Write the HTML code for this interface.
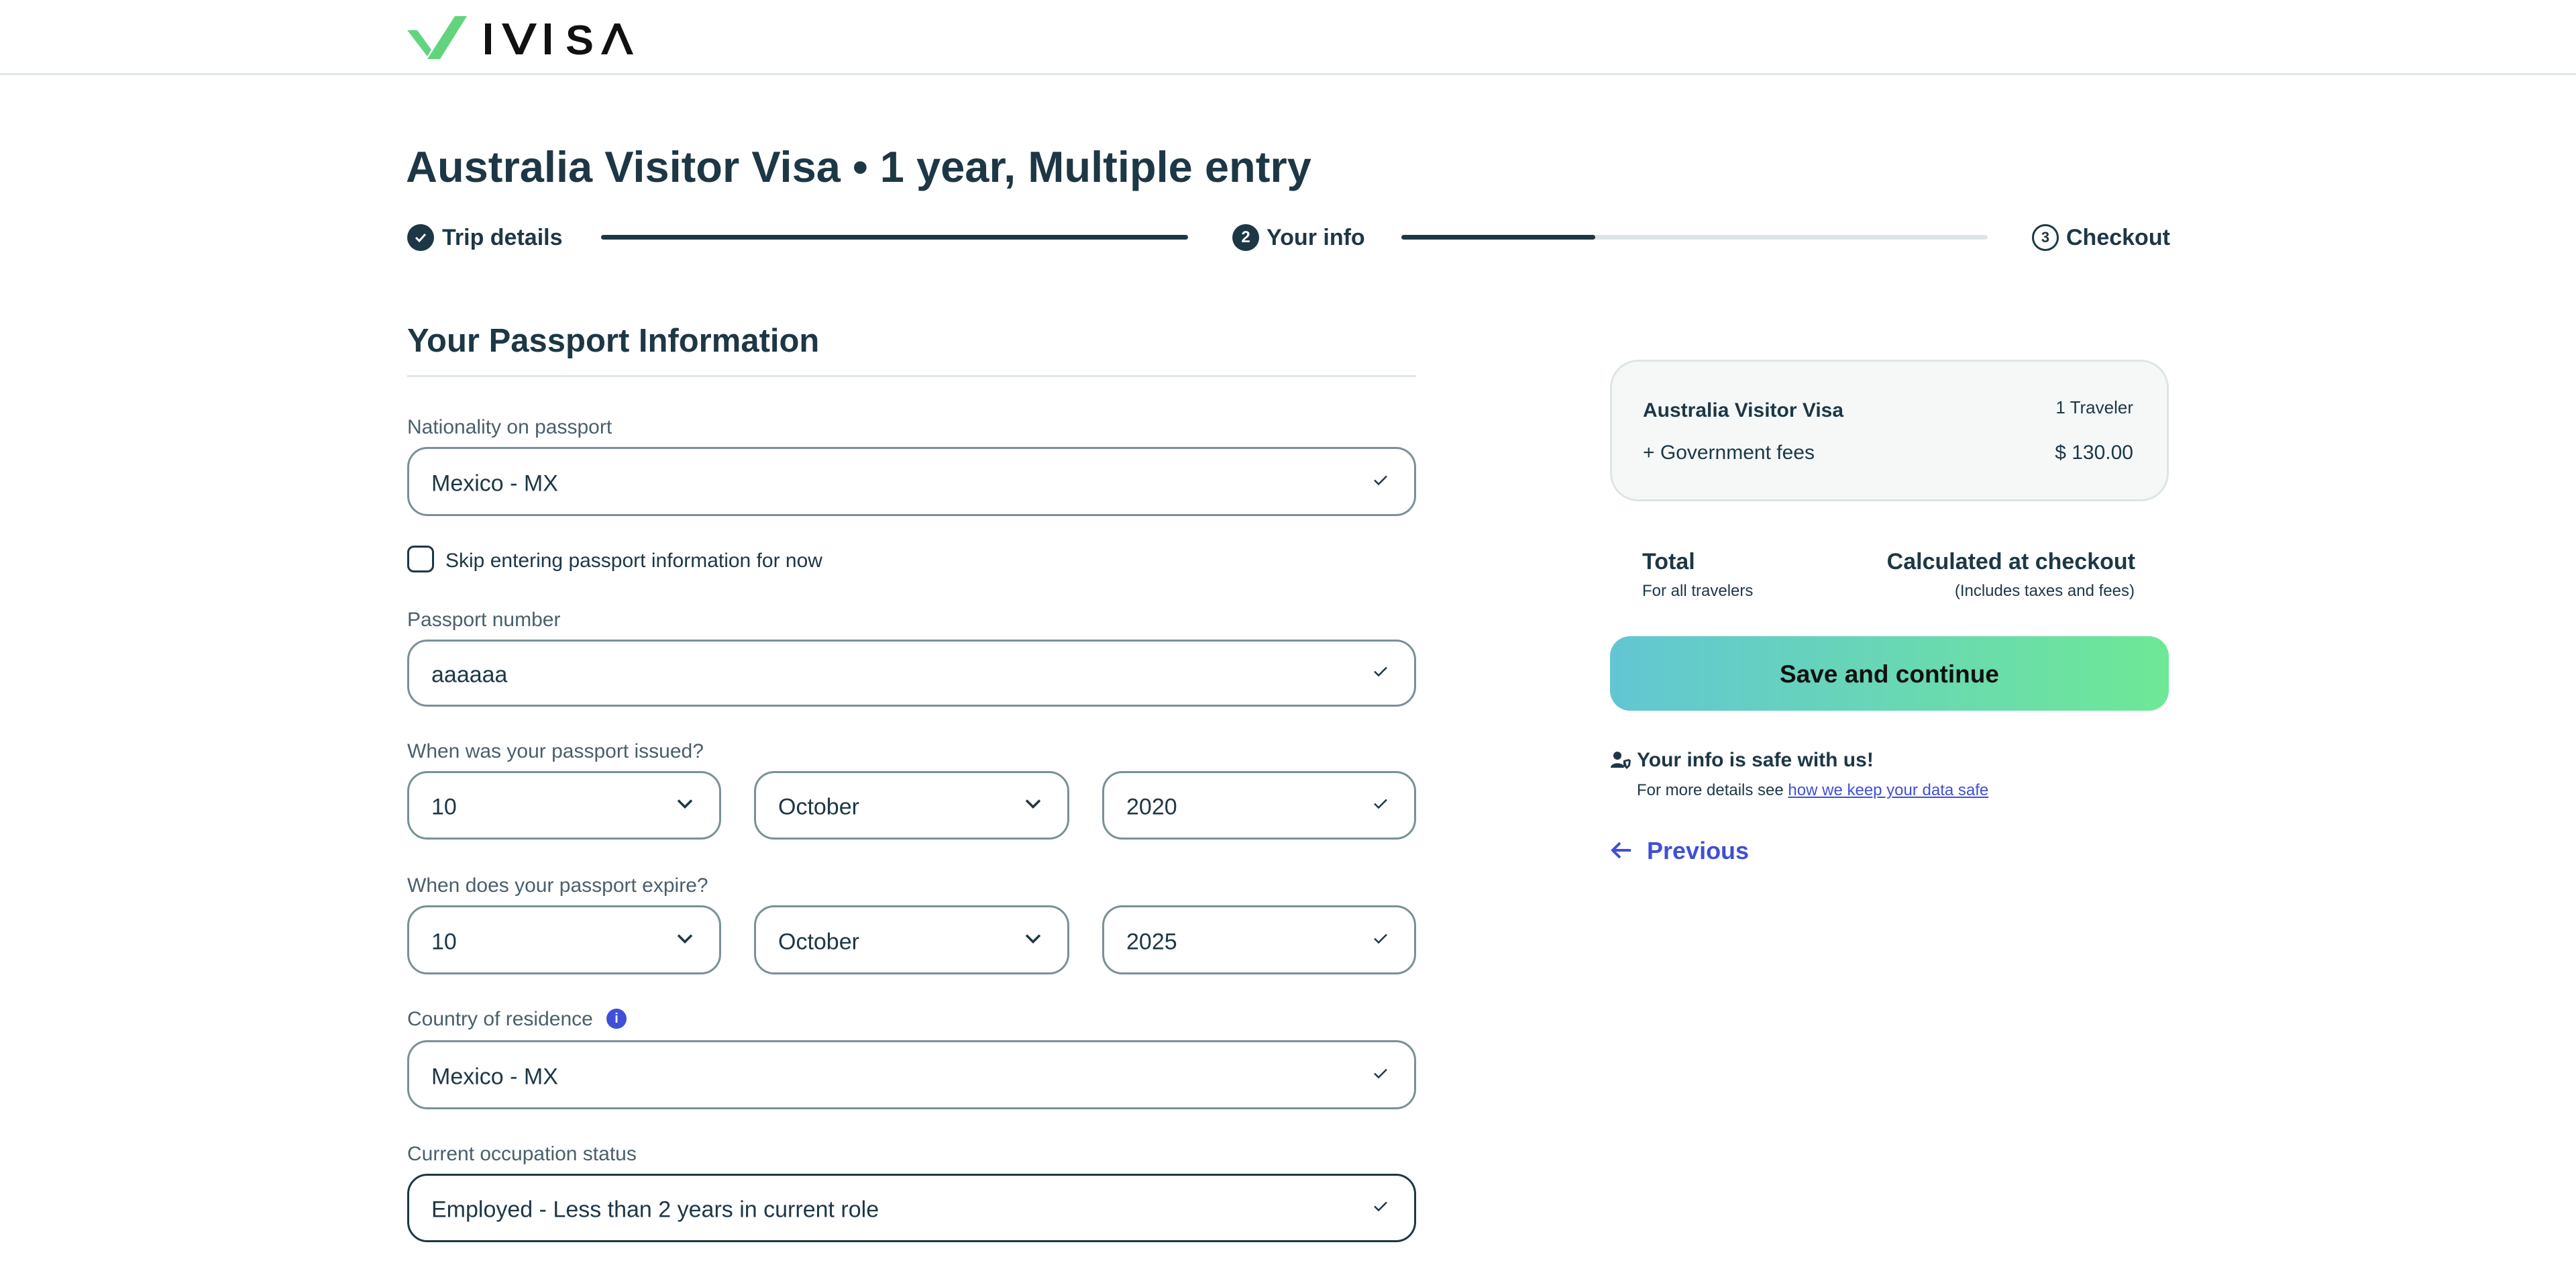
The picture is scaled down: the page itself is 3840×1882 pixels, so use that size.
<!DOCTYPE html>
<html><head><meta charset="utf-8"><style>
*{box-sizing:border-box;margin:0;padding:0}
body{width:3840px;height:1882px;background:#fff;font-family:"Liberation Sans",Arial,sans-serif;color:#1d3745;position:relative;overflow:hidden}
.a{position:absolute;white-space:nowrap}
.hdr{position:absolute;left:0;top:0;width:3840px;height:112px;border-bottom:3px solid #dfe6e7}
.lbl{position:absolute;left:607px;font-size:30px;color:#4a5f6a}
.inp{position:absolute;border:3px solid #7a9096;border-radius:30px;background:#fff}
.inp span{position:absolute;left:33px;top:calc(50% + 3px);transform:translateY(-50%);font-size:34px;color:#1d3745}
.inp i{position:absolute;right:38px;top:50%;transform:translateY(-50%);font-style:normal}
.chk{width:24px;height:18px}
.chev{width:26px;height:16px}
.circ{position:absolute;width:40px;height:40px;border-radius:50%;display:flex;align-items:center;justify-content:center;font-size:24px;font-weight:bold}
</style></head><body>
<div class="hdr"></div>
<svg class="a" style="left:607px;top:22px" width="340" height="68" viewBox="0 0 340 68">
<path d="M0 23 L15 23 L36 52 L30 62 Z" fill="#63d47e"/>
<path d="M71 2 L89 2 L49 66 L30 66 Z" fill="#63d47e"/>
<rect x="116" y="13" width="9" height="46" fill="#111"/>
<path d="M141 13 L151 13 L167 50 L183 13 L193 13 L172 59 L162 59 Z" fill="#111"/>
<rect x="205" y="13" width="9" height="46" fill="#111"/>
<text x="236" y="59" font-family="Liberation Sans" font-weight="bold" font-size="62" fill="#111" textLength="42" lengthAdjust="spacingAndGlyphs">S</text>
<path d="M289 59 L309 13 L317 13 L337 59 L328 59 L313 23 L298 59 Z" fill="#111"/>
</svg>

<div class="a" style="left:605px;top:211px;font-size:65px;font-weight:bold">Australia Visitor Visa • 1 year, Multiple entry</div>

<div class="circ" style="left:607px;top:334px;background:#1d3745;color:#fff"><svg width="20" height="16" viewBox="0 0 20 16"><path d="M3 8 L8 13 L17 3" stroke="#fff" stroke-width="3" fill="none"/></svg></div>
<div class="a" style="left:659px;top:335px;font-size:34px;font-weight:bold">Trip details</div>
<div class="a" style="left:896px;top:350px;width:875px;height:7px;border-radius:4px;background:#1d3745"></div>
<div class="circ" style="left:1837px;top:334px;background:#1d3745;color:#fff">2</div>
<div class="a" style="left:1888px;top:335px;font-size:34px;font-weight:bold">Your info</div>
<div class="a" style="left:2089px;top:350px;width:874px;height:7px;border-radius:4px;background:#dde5e6"></div>
<div class="a" style="left:2089px;top:350px;width:289px;height:7px;border-radius:4px;background:#1d3745"></div>
<div class="circ" style="left:3029px;top:334px;border:3px solid #1d3745;font-size:22px">3</div>
<div class="a" style="left:3080px;top:335px;font-size:34px;font-weight:bold">Checkout</div>

<div class="a" style="left:607px;top:480px;font-size:49px;font-weight:bold">Your Passport Information</div>
<div class="a" style="left:607px;top:559px;width:1504px;height:3px;background:#dfe6e7"></div>

<div class="lbl" style="top:620px">Nationality on passport</div>
<div class="inp" style="left:607px;top:666px;width:1504px;height:103px"><span>Mexico - MX</span><i><svg class="chk" viewBox="0 0 24 18"><path d="M3 9 L9 15 L21 3" stroke="#1d3745" stroke-width="2.5" fill="none"/></svg></i></div>

<div class="a" style="left:607px;top:813px;width:40px;height:40px;border:3px solid #1d3745;border-radius:10px"></div>
<div class="a" style="left:664px;top:819px;font-size:30px">Skip entering passport information for now</div>

<div class="lbl" style="top:907px">Passport number</div>
<div class="inp" style="left:607px;top:953px;width:1504px;height:100px"><span>aaaaaa</span><i><svg class="chk" viewBox="0 0 24 18"><path d="M3 9 L9 15 L21 3" stroke="#1d3745" stroke-width="2.5" fill="none"/></svg></i></div>

<div class="lbl" style="top:1103px">When was your passport issued?</div>
<div class="inp" style="left:607px;top:1149px;width:468px;height:102px"><span>10</span><i><svg class="chev" viewBox="0 0 26 16"><path d="M3 3 L13 13 L23 3" stroke="#1d3745" stroke-width="3.5" fill="none"/></svg></i></div>
<div class="inp" style="left:1124px;top:1149px;width:470px;height:102px"><span>October</span><i><svg class="chev" viewBox="0 0 26 16"><path d="M3 3 L13 13 L23 3" stroke="#1d3745" stroke-width="3.5" fill="none"/></svg></i></div>
<div class="inp" style="left:1643px;top:1149px;width:468px;height:102px"><span>2020</span><i><svg class="chk" viewBox="0 0 24 18"><path d="M3 9 L9 15 L21 3" stroke="#1d3745" stroke-width="2.5" fill="none"/></svg></i></div>

<div class="lbl" style="top:1303px">When does your passport expire?</div>
<div class="inp" style="left:607px;top:1349px;width:468px;height:103px"><span>10</span><i><svg class="chev" viewBox="0 0 26 16"><path d="M3 3 L13 13 L23 3" stroke="#1d3745" stroke-width="3.5" fill="none"/></svg></i></div>
<div class="inp" style="left:1124px;top:1349px;width:470px;height:103px"><span>October</span><i><svg class="chev" viewBox="0 0 26 16"><path d="M3 3 L13 13 L23 3" stroke="#1d3745" stroke-width="3.5" fill="none"/></svg></i></div>
<div class="inp" style="left:1643px;top:1349px;width:468px;height:103px"><span>2025</span><i><svg class="chk" viewBox="0 0 24 18"><path d="M3 9 L9 15 L21 3" stroke="#1d3745" stroke-width="2.5" fill="none"/></svg></i></div>

<div class="lbl" style="top:1502px">Country of residence</div>
<div class="a" style="left:904px;top:1503px;width:30px;height:30px;border-radius:50%;background:#3f4fd8;color:#fff;font-size:20px;font-weight:bold;text-align:center;line-height:30px">i</div>
<div class="inp" style="left:607px;top:1550px;width:1504px;height:103px"><span>Mexico - MX</span><i><svg class="chk" viewBox="0 0 24 18"><path d="M3 9 L9 15 L21 3" stroke="#1d3745" stroke-width="2.5" fill="none"/></svg></i></div>

<div class="lbl" style="top:1703px">Current occupation status</div>
<div class="inp" style="left:607px;top:1749px;width:1504px;height:102px;border-color:#1d3745"><span>Employed - Less than 2 years in current role</span><i><svg class="chk" viewBox="0 0 24 18"><path d="M3 9 L9 15 L21 3" stroke="#1d3745" stroke-width="2.5" fill="none"/></svg></i></div>

<div class="a" style="left:2400px;top:536px;width:833px;height:211px;background:#f6f8f8;border:3px solid #dde5e6;border-radius:42px"></div>
<div class="a" style="left:2449px;top:595px;font-size:30px;font-weight:bold">Australia Visitor Visa</div>
<div class="a" style="left:3180px;top:592px;font-size:26px;transform:translateX(-100%)">1 Traveler</div>
<div class="a" style="left:2449px;top:658px;font-size:30px">+ Government fees</div>
<div class="a" style="left:3180px;top:658px;font-size:30px;transform:translateX(-100%)">$ 130.00</div>

<div class="a" style="left:2448px;top:818px;font-size:34px;font-weight:bold">Total</div>
<div class="a" style="left:2448px;top:867px;font-size:24px">For all travelers</div>
<div class="a" style="left:3183px;top:818px;font-size:34px;font-weight:bold;transform:translateX(-100%)">Calculated at checkout</div>
<div class="a" style="left:3182px;top:867px;font-size:24px;transform:translateX(-100%)">(Includes taxes and fees)</div>

<div class="a" style="left:2400px;top:948px;width:833px;height:111px;border-radius:30px;background:linear-gradient(90deg,#62c6d3,#6ee896);display:flex;align-items:center;justify-content:center;font-size:37px;font-weight:bold;color:#111;padding-top:2px">Save and continue</div>

<svg class="a" style="left:2400px;top:1118px" width="32" height="30" viewBox="0 0 32 30"><circle cx="11" cy="8" r="6" fill="#1d3745"/><path d="M1 26 C1 17 21 17 21 26 Z" fill="#1d3745"/><path d="M20 15 L28 13 L31 15 L30 23 L25 28 L20 23 Z" fill="#1d3745"/><path d="M23 17 L28 16 L27 22 L25 24 Z" fill="#fff"/></svg>
<div class="a" style="left:2440px;top:1116px;font-size:30px;font-weight:bold">Your info is safe with us!</div>
<div class="a" style="left:2440px;top:1164px;font-size:24px">For more details see <span style="color:#3f4fd8;text-decoration:underline">how we keep your data safe</span></div>

<svg class="a" style="left:2400px;top:1252px" width="34" height="30" viewBox="0 0 34 30"><path d="M31 15 L5 15 M15 4 L4 15 L15 26" stroke="#3f4fd8" stroke-width="4" fill="none"/></svg>
<div class="a" style="left:2455px;top:1247px;font-size:36px;font-weight:bold;color:#3f4fd8">Previous</div>
</body></html>
